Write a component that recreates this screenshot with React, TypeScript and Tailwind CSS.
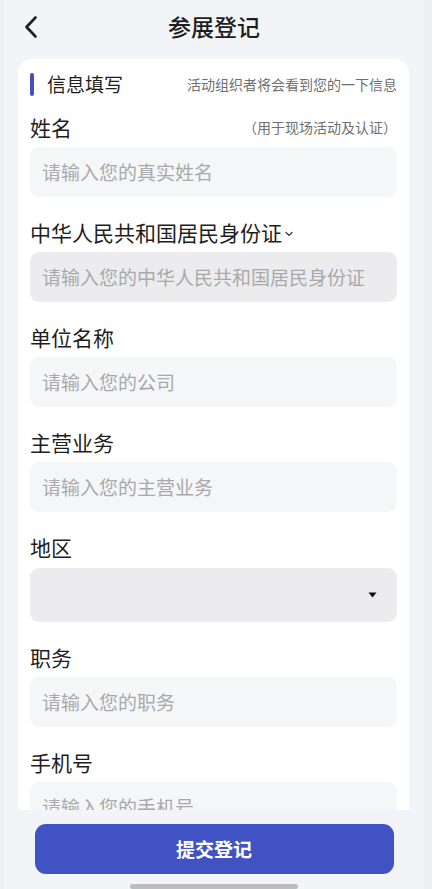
const FONT = { fontFamily: '"Noto Sans CJK SC", "Noto Sans", sans-serif' };

type Field = {
  label: string;
  placeholder?: string;
  note?: string;
  kind?: 'text' | 'idcard' | 'select';
};

const FIELDS: Field[] = [
  { label: '姓名', placeholder: '请输入您的真实姓名', note: '（用于现场活动及认证）' },
  { label: '中华人民共和国居民身份证', placeholder: '请输入您的中华人民共和国居民身份证', kind: 'idcard' },
  { label: '单位名称', placeholder: '请输入您的公司' },
  { label: '主营业务', placeholder: '请输入您的主营业务' },
  { label: '地区', kind: 'select' },
  { label: '职务', placeholder: '请输入您的职务' },
  { label: '手机号', placeholder: '请输入您的手机号' },
];

function BackIcon() {
  return (
    <svg width="16" height="24" viewBox="0 0 16 24" fill="none">
      <path d="M12.5 2.5 3.5 12l9 9.5" stroke="#1f1f1f" strokeWidth="2.6" strokeLinecap="round" strokeLinejoin="round" />
    </svg>
  );
}

function FieldRow({ field }: { field: Field }) {
  const isSelect = field.kind === 'select';
  return (
    <div className="flex flex-col">
      <div className="flex items-center justify-between h-[28px] mb-[6px]">
        <div className="flex items-center text-[21px] text-[#1e1e1e] leading-none">
          <span>{field.label}</span>
          {field.kind === 'idcard' && (
            <svg width="10" height="10" viewBox="0 0 10 10" className="ml-[2px] mt-[3px]">
              <path d="M2 3.5 5 6.5 8 3.5" stroke="#333" strokeWidth="1.2" fill="none" strokeLinecap="round" />
            </svg>
          )}
        </div>
        {field.note && <span className="text-[14px] text-[#6f6f6f]">{field.note}</span>}
      </div>
      {isSelect ? (
        <div className="mt-[1px] h-[54px] rounded-[9px] bg-[#ececee] flex items-center justify-end pr-[20px]">
          <svg width="9" height="6" viewBox="0 0 9 6">
            <path d="M0.5 0.5h8L4.5 5.5z" fill="#111" />
          </svg>
        </div>
      ) : (
        <div
          className={`h-[50px] rounded-[9px] flex items-center pl-[12px] text-[19px] text-[#a9a9ab] ${
            field.kind === 'idcard' ? 'bg-[#ececee]' : 'bg-[#f5f6f8]'
          }`}
        >
          {field.placeholder}
        </div>
      )}
    </div>
  );
}

export default function App() {
  return (
    <div style={FONT} className="w-[432px] h-[889px] bg-[#f3f4f7] flex overflow-hidden">
      <div className="w-[4px] bg-[#efeff1]" />
      <div className="w-[420px] flex flex-col">
        {/* header */}
        <div className="h-[59px] shrink-0 relative flex items-center justify-center">
          <div className="absolute left-[19px] top-[15px]">
            <BackIcon />
          </div>
          <span className="text-[23px] font-medium text-[#1e1e1e] -mt-[6px]">参展登记</span>
        </div>

        {/* scroll area */}
        <div className="flex-1 overflow-hidden pl-[14px]">
          <div className="w-[391px] bg-white rounded-t-[14px] px-[12px] pt-[13px] pb-6 flex flex-col">
            <div className="flex items-center h-[24px]">
              <div className="w-[4px] h-[23px] rounded-full bg-[#4051c6]" />
              <span className="ml-[13px] text-[19px] text-[#1e1e1e]">信息填写</span>
              <span className="ml-auto text-[14px] text-[#6f6f6f]">活动组织者将会看到您的一下信息</span>
            </div>
            <div className="flex flex-col gap-[21px] mt-[17px]">
              {FIELDS.map((f) => (
                <FieldRow key={f.label} field={f} />
              ))}
            </div>
          </div>
        </div>

        {/* footer */}
        <div className="h-[79px] shrink-0 flex flex-col items-center pt-[14px]">
          <button className="w-[359px] h-[51px] rounded-[11px] bg-[#4153c3] text-white text-[19px] font-bold">
            提交登记
          </button>
          <div className="mt-[10px] w-[168px] h-[5px] rounded-full bg-[#bdbdbf]" />
        </div>
      </div>
      <div className="w-[8px] bg-[#efefef]" />
    </div>
  );
}
